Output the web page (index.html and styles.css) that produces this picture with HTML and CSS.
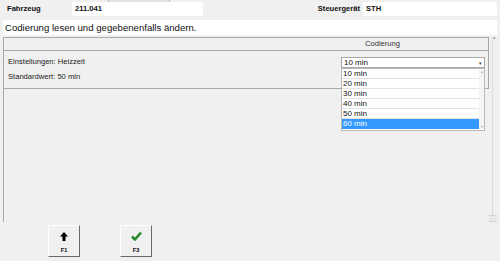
FILE: index.html
```html
<!DOCTYPE html>
<html lang="de">
<head>
    <meta charset="UTF-8">
    <title>Codierung</title>
    <link rel="stylesheet" href="styles.css">
</head>
<body>
    <div class="tab-stub"><span></span></div>

    <div class="head-row">
        <div class="lbl">Fahrzeug</div>
        <div class="field field-car">211.041</div>
        <div class="lbl lbl-right">Steuergerät</div>
        <div class="field field-ecu">STH</div>
    </div>

    <div class="desc">Codierung lesen und gegebenenfalls ändern.</div>

    <div class="panel">
        <div class="grid">
            <div class="grid-head">
                <div class="col-a"></div>
                <div class="col-b">Codierung</div>
            </div>
            <div class="grid-row">
                <div class="col-a">
                    <p>Einstellungen: Heizzeit</p>
                    <p>Standardwert: 50 min</p>
                </div>
                <div class="col-b">
                    <div class="combo">
                        <span class="combo-text">10 min</span>
                        <span class="combo-arrow">&#9662;</span>
                        <div class="droplist">
                            <ul>
                                <li>10 min</li>
                                <li>20 min</li>
                                <li>30 min</li>
                                <li>40 min</li>
                                <li>50 min</li>
                                <li class="sel">60 min</li>
                            </ul>
                            <div class="list-scroll">
                                <span>&#9652;</span>
                                <span>&#9662;</span>
                            </div>
                        </div>
                    </div>
                </div>
            </div>
        </div>
        <div class="vscroll">
            <span class="up">&#9652;</span>
            <span class="end"></span>
        </div>
    </div>

    <div class="keys">
        <button class="key">
            <svg width="8" height="9" viewBox="0 0 8 9"><path d="M4 0 L8 4.5 L5.5 4.5 L5.5 9 L2.5 9 L2.5 4.5 L0 4.5 Z" fill="#000"/></svg>
            <span>F1</span>
        </button>
        <button class="key">
            <svg width="11" height="10" viewBox="0 0 11 10"><path d="M1 5.5 L4 8.5 L10 1.5" fill="none" stroke="#2a8a2a" stroke-width="2.6" stroke-linejoin="round"/></svg>
            <span>F3</span>
        </button>
    </div>
</body>
</html>
```

FILE: styles.css
```css
 body {
     margin: 0;
     background-color: #f0f0f0;
     font-family: "Liberation Sans", Arial, sans-serif;
     color: #111;
     width: 500px;
     height: 261px;
     overflow: hidden;
 }

 .tab-stub {
     height: 2px;
 }

 .tab-stub span {
     display: block;
     margin-left: 108px;
     width: 60px;
     height: 2px;
     border-left: 1px solid #b8b8b8;
     border-right: 1px solid #b8b8b8;
     background-color: #e4e4e4;
 }

 .head-row {
     display: flex;
     height: 14px;
     font-size: 7.6px;
     font-weight: bold;
 }

 .lbl {
     width: 65px;
     padding-left: 7px;
     line-height: 14px;
 }

 .lbl-right {
     flex: 1;
     width: auto;
     text-align: right;
     padding-right: 3px;
 }

 .field {
     background-color: #fff;
     padding-left: 3px;
     line-height: 14px;
 }

 .field-car {
     width: 128px;
 }

 .field-ecu {
     width: 131px;
     margin-right: 3px;
 }

 .desc {
     margin: 4px 3px 0 3px;
     height: 15px;
     line-height: 15px;
     background-color: #fff;
     padding-left: 2px;
     font-size: 9.6px;
 }

 .panel {
     display: flex;
     margin: 2px 0 0 3px;
     width: 493px;
     height: 185px;
     border-left: 1px solid #a8a8a8;
 }

 .grid {
     width: 485px;
     font-size: 7.6px;
 }

 .grid-head {
     display: flex;
     height: 12px;
     line-height: 12px;
     border-top: 1px solid #a8a8a8;
     border-bottom: 1px solid #a8a8a8;
     border-right: 1px solid #a8a8a8;
     color: #333;
 }

 .col-a {
     width: 273px;
 }

 .col-b {
     flex: 1;
     text-align: center;
 }

 .grid-row {
     display: flex;
     height: 37px;
     border-bottom: 1px solid #a8a8a8;
     border-right: 1px solid #a8a8a8;
 }

 .grid-row .col-a {
     padding: 3px 0 0 4px;
     width: 269px;
 }

 .grid-row p {
     margin: 0;
     line-height: 15px;
     color: #222;
 }

 .combo {
     position: relative;
     margin: 6px 0 0 64px;
     width: 142px;
     height: 9px;
     border: 1px solid #a8a8a8;
     background-color: #fff;
     display: flex;
     align-items: center;
     font-size: 8px;
     text-align: left;
 }

 .combo-text {
     flex: 1;
     padding-left: 2px;
 }

 .combo-arrow {
     font-size: 5px;
     padding-right: 2px;
     color: #333;
 }

 .droplist {
     position: absolute;
     top: 10px;
     left: -1px;
     width: 142px;
     display: flex;
     border: 1px solid #b8b8b8;
     background-color: #fff;
     padding-bottom: 1px;
 }

 .droplist ul {
     list-style: none;
     margin: 0;
     padding: 0;
     flex: 1;
 }

 .droplist li {
     height: 9px;
     line-height: 9px;
     padding-left: 1px;
     border-bottom: 1px solid #e2e2e2;
 }

 .droplist li.sel {
     background-color: #3399ff;
     color: #fff;
     border-bottom: none;
     height: 10px;
     line-height: 10px;
 }

 .list-scroll {
     width: 5px;
     display: flex;
     flex-direction: column;
     justify-content: space-between;
     background-color: #f4f4f4;
     font-size: 4px;
     color: #aaa;
     text-align: center;
 }

 .vscroll {
     flex: 1;
     margin-left: 3px;
     border-left: 1px solid #dcdcdc;
     display: flex;
     flex-direction: column;
     justify-content: space-between;
     font-size: 5px;
     color: #999;
 }

 .vscroll .up {
     margin-top: -3px;
 }

 .vscroll .end {
     height: 5px;
     margin-left: -4px;
     border-top: 1px solid #d4d4d4;
     border-bottom: 1px solid #d4d4d4;
     background-color: #e8e8e8;
 }

 .keys {
     display: flex;
     gap: 40px;
     margin: 3px 0 0 48px;
 }

 .key {
     width: 32px;
     height: 32px;
     padding: 0;
     background-color: #f0f0f0;
     border: 1px solid;
     border-color: #fff #6a6a6a #6a6a6a #fff;
     display: flex;
     flex-direction: column;
     align-items: center;
     justify-content: flex-end;
     font-family: "Liberation Sans", Arial, sans-serif;
 }

 .key svg {
     margin-bottom: 6px;
 }

 .key span {
     font-size: 5.5px;
     font-weight: bold;
     margin-bottom: 3px;
 }
```
